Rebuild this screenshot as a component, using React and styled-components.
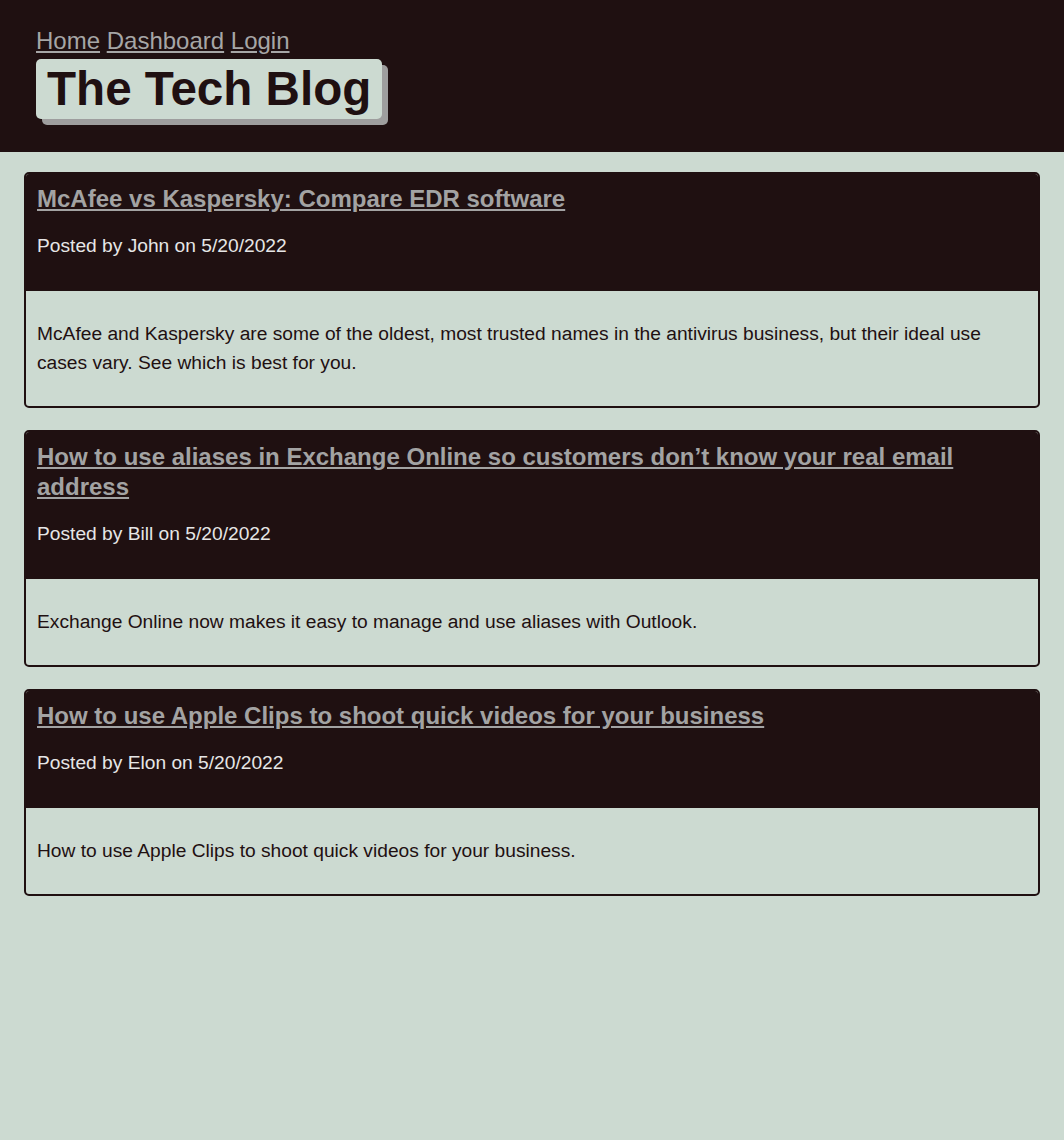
import styled, { createGlobalStyle } from "styled-components";

const posts = [
  {
    title: "McAfee vs Kaspersky: Compare EDR software",
    author: "John",
    date: "5/20/2022",
    body: "McAfee and Kaspersky are some of the oldest, most trusted names in the antivirus business, but their ideal use cases vary. See which is best for you.",
  },
  {
    title: "How to use aliases in Exchange Online so customers don\u2019t know your real email address",
    author: "Bill",
    date: "5/20/2022",
    body: "Exchange Online now makes it easy to manage and use aliases with Outlook.",
  },
  {
    title: "How to use Apple Clips to shoot quick videos for your business",
    author: "Elon",
    date: "5/20/2022",
    body: "How to use Apple Clips to shoot quick videos for your business.",
  },
];

const App = () => {
  return (
    <>
      <GlobalStyle />
      <Header>
        <Nav>
          <NavLink href="#">Home</NavLink> <NavLink href="#">Dashboard</NavLink>{" "}
          <NavLink href="#">Login</NavLink>
        </Nav>
        <Title>The Tech Blog</Title>
      </Header>
      <Main>
        {posts.map((post) => (
          <Card key={post.title}>
            <CardHeader>
              <PostTitle>
                <PostLink href="#">{post.title}</PostLink>
              </PostTitle>
              <Meta>
                Posted by {post.author} on {post.date}
              </Meta>
            </CardHeader>
            <CardBody>{post.body}</CardBody>
          </Card>
        ))}
      </Main>
    </>
  );
};

export default App;

const GlobalStyle = createGlobalStyle`
  html, body {
    margin: 0;
    padding: 0;
    background-color: #ccdad1;
    font-family: "Liberation Sans", Arial, sans-serif;
  }
`;

const Header = styled.header`
  background-color: #1f1011;
  padding: 27px 36px 27px;
  height: 152px;
  box-sizing: border-box;
`;

const Nav = styled.nav`
  font-size: 24px;
  line-height: 28px;
`;

const NavLink = styled.a`
  color: #a6a6a6;
  text-decoration: underline;
`;

const Title = styled.h1`
  display: inline-block;
  margin: 4px 0 0;
  padding: 0 11px;
  height: 60px;
  line-height: 60px;
  font-size: 47.6px;
  font-weight: bold;
  color: #1f1011;
  background-color: #ccdad1;
  border-radius: 5px;
  box-shadow: 6px 6px 0 #9e9e9e;
`;

const Main = styled.main`
  padding: 20px 24px;
  display: flex;
  flex-direction: column;
  gap: 22px;
`;

const Card = styled.article`
  border: 2px solid #1f1011;
  border-radius: 5px;
  overflow: hidden;
`;

const CardHeader = styled.div`
  background-color: #1f1011;
  padding: 10px 11px 34px;
`;

const PostTitle = styled.h2`
  margin: 0 0 21px;
  font-size: 24px;
  line-height: 30px;
  font-weight: bold;
`;

const PostLink = styled.a`
  color: #a3a3a3;
  text-decoration: underline;
`;

const Meta = styled.p`
  margin: 0;
  font-size: 19.2px;
  line-height: 22px;
  color: #e6e6e6;
`;

const CardBody = styled.p`
  margin: 0;
  padding: 28px 11px 29px;
  font-size: 19.2px;
  line-height: 29px;
  color: #1f1011;
`;
